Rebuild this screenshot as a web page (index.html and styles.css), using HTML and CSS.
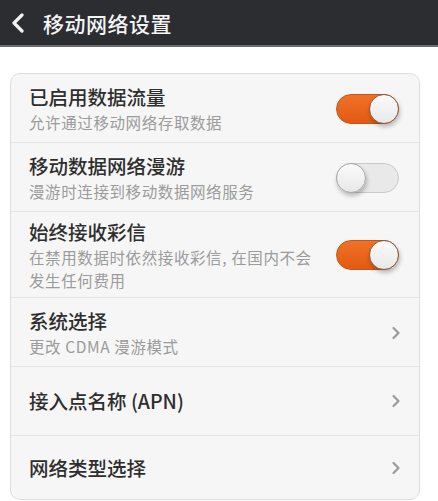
FILE: index.html
```html
<!DOCTYPE html>
<html lang="zh-CN">
<head>
    <meta charset="UTF-8">
    <meta name="viewport" content="width=device-width, initial-scale=1.0">
    <title>移动网络设置</title>
    <link rel="stylesheet" href="styles.css">
</head>
<body>
    <header class="top-bar">
        <svg class="back-icon" width="16" height="20" viewBox="0 0 16 20">
            <path d="M12 2 L4 10 L12 18" fill="none" stroke="#f2f2f2" stroke-width="3.2" stroke-linecap="round" stroke-linejoin="round"/>
        </svg>
        <h1 class="top-title">移动网络设置</h1>
    </header>

    <main class="page">
        <div class="settings-card">
            <div class="setting-row">
                <div class="setting-text">
                    <div class="setting-title">已启用数据流量</div>
                    <div class="setting-desc">允许通过移动网络存取数据</div>
                </div>
                <div class="switch on"><span class="knob"></span></div>
            </div>
            <div class="setting-row">
                <div class="setting-text">
                    <div class="setting-title">移动数据网络漫游</div>
                    <div class="setting-desc">漫游时连接到移动数据网络服务</div>
                </div>
                <div class="switch"><span class="knob"></span></div>
            </div>
            <div class="setting-row tall">
                <div class="setting-text">
                    <div class="setting-title">始终接收彩信</div>
                    <div class="setting-desc">在禁用数据时依然接收彩信, 在国内不会<br>发生任何费用</div>
                </div>
                <div class="switch on"><span class="knob"></span></div>
            </div>
            <div class="setting-row">
                <div class="setting-text">
                    <div class="setting-title">系统选择</div>
                    <div class="setting-desc">更改 CDMA 漫游模式</div>
                </div>
                <svg class="chevron" width="10" height="14" viewBox="0 0 10 14">
                    <path d="M2.5 2 L7.5 7 L2.5 12" fill="none" stroke="#9a9a9a" stroke-width="2.2" stroke-linecap="round" stroke-linejoin="round"/>
                </svg>
            </div>
            <div class="setting-row single">
                <div class="setting-text">
                    <div class="setting-title">接入点名称 (APN)</div>
                </div>
                <svg class="chevron" width="10" height="14" viewBox="0 0 10 14">
                    <path d="M2.5 2 L7.5 7 L2.5 12" fill="none" stroke="#9a9a9a" stroke-width="2.2" stroke-linecap="round" stroke-linejoin="round"/>
                </svg>
            </div>
            <div class="setting-row single last">
                <div class="setting-text">
                    <div class="setting-title">网络类型选择</div>
                </div>
                <svg class="chevron" width="10" height="14" viewBox="0 0 10 14">
                    <path d="M2.5 2 L7.5 7 L2.5 12" fill="none" stroke="#9a9a9a" stroke-width="2.2" stroke-linecap="round" stroke-linejoin="round"/>
                </svg>
            </div>
        </div>
    </main>
</body>
</html>
```

FILE: styles.css
```css
:root {
    --bar-dark: #2b2d31;
    --card-bg: #f6f6f6;
    --line: #e4e4e4;
    --title: #2e2e2e;
    --desc: #9b9b9b;
    --orange: #ea6419;
}

body {
    margin: 0;
    background: #ffffff;
    font-family: 'Noto Sans CJK SC', 'Noto Sans', 'Liberation Sans', sans-serif;
    -webkit-font-smoothing: antialiased;
}

/* 顶部标题栏 */
.top-bar {
    height: 45px;
    background: var(--bar-dark);
    border-bottom: 2px solid #6a6c70;
    display: flex;
    align-items: center;
    padding-left: 10px;
    gap: 17px;
}

.back-icon {
    display: block;
}

.top-title {
    margin: 0;
    color: #f4f4f4;
    font-size: 21px;
    font-weight: 500;
    letter-spacing: 0.5px;
}

.page {
    padding: 26px 18px 0 10px;
}

.settings-card {
    background: var(--card-bg);
    border: 1px solid #dedede;
    border-radius: 10px;
}

.setting-row {
    display: flex;
    align-items: center;
    justify-content: space-between;
    padding: 9px 20px 8px 18px;
    border-bottom: 1px solid var(--line);
}

.setting-row.tall {
    padding: 6px 20px 5px 18px;
}

.setting-row.single {
    min-height: 69px;
    padding-top: 0;
    padding-bottom: 0;
    box-sizing: border-box;
}

.setting-row.last {
    border-bottom: none;
    min-height: 63px;
}

.setting-title {
    color: var(--title);
    font-size: 19.5px;
    font-weight: 500;
    line-height: 28px;
}

.setting-desc {
    color: var(--desc);
    font-size: 15.5px;
    line-height: 23px;
    letter-spacing: 0.6px;
}

/* 开关 */
.switch {
    position: relative;
    width: 61px;
    height: 28px;
    border-radius: 15px;
    background: #e9e9e9;
    border: 1px solid #c9c9c9;
    flex-shrink: 0;
}

.switch.on {
    background: linear-gradient(#f07128, #e25a12);
    border-color: #c9531a;
}

.knob {
    position: absolute;
    top: -1px;
    left: -1px;
    width: 30px;
    height: 30px;
    border-radius: 50%;
    background: linear-gradient(#fbfbfb, #e8e8e8);
    border: 1px solid #a9a9a9;
    box-sizing: border-box;
    box-shadow: 1px 3px 4px rgba(0, 0, 0, 0.25);
}

.switch.on .knob {
    left: auto;
    right: -1px;
    border-color: #8a5a3a;
}

.chevron {
    display: block;
    margin-right: -2px;
}
```
